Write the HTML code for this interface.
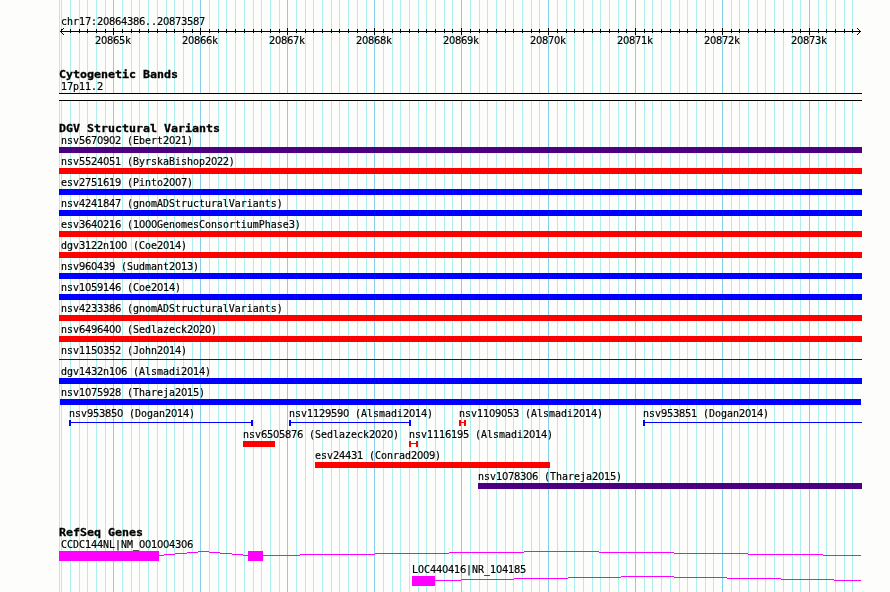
<!DOCTYPE html>
<html lang="en"><head><meta charset="utf-8"><title>chr17:20864386..20873587</title>
<style>
html,body{margin:0;padding:0;background:#fdfefc;}
#p{position:relative;width:890px;height:592px;overflow:hidden;background:#fdfefc;}
#p div{position:absolute;}
.g{top:0;width:1px;height:592px;background:#afeeee;}
.G{top:0;width:1px;height:592px;background:#87ceeb;}
.k{background:#000;}
.t{font-family:"DejaVu Sans Mono","Liberation Mono",monospace;font-size:10.900px;line-height:13px;height:13px;color:#000;white-space:pre;transform:scaleX(0.9143);transform-origin:0 0;-webkit-text-stroke:0.2px #000;}
.b{font-family:"DejaVu Sans Mono","Liberation Mono",monospace;font-weight:bold;font-size:11.000px;line-height:13px;height:13px;color:#000;white-space:pre;transform:scaleX(1.0570);transform-origin:0 0;-webkit-text-stroke:0.3px #000;}
.d{font-family:"DejaVu Sans","Liberation Sans",sans-serif;letter-spacing:-0.3726px;}
.w{background:#fdfefc;}
.r{background:#f00;}.u{background:#00f;}.i{background:#4b0082;}.m{background:#f0f;}
#tx{left:0;top:0;width:890px;height:592px;will-change:transform;}
</style></head><body><div id="p">
<div class="g" style="left:59px"></div>
<div class="g" style="left:61px"></div>
<div class="g" style="left:70px"></div>
<div class="g" style="left:79px"></div>
<div class="g" style="left:87px"></div>
<div class="g" style="left:96px"></div>
<div class="g" style="left:105px"></div>
<div class="G" style="left:113px"></div>
<div class="g" style="left:122px"></div>
<div class="g" style="left:131px"></div>
<div class="g" style="left:139px"></div>
<div class="g" style="left:148px"></div>
<div class="g" style="left:157px"></div>
<div class="g" style="left:166px"></div>
<div class="g" style="left:174px"></div>
<div class="g" style="left:183px"></div>
<div class="g" style="left:192px"></div>
<div class="G" style="left:200px"></div>
<div class="g" style="left:209px"></div>
<div class="g" style="left:218px"></div>
<div class="g" style="left:226px"></div>
<div class="g" style="left:235px"></div>
<div class="g" style="left:244px"></div>
<div class="g" style="left:253px"></div>
<div class="g" style="left:261px"></div>
<div class="g" style="left:270px"></div>
<div class="g" style="left:279px"></div>
<div class="G" style="left:287px"></div>
<div class="g" style="left:296px"></div>
<div class="g" style="left:305px"></div>
<div class="g" style="left:313px"></div>
<div class="g" style="left:322px"></div>
<div class="g" style="left:331px"></div>
<div class="g" style="left:339px"></div>
<div class="g" style="left:348px"></div>
<div class="g" style="left:357px"></div>
<div class="g" style="left:366px"></div>
<div class="G" style="left:374px"></div>
<div class="g" style="left:383px"></div>
<div class="g" style="left:392px"></div>
<div class="g" style="left:400px"></div>
<div class="g" style="left:409px"></div>
<div class="g" style="left:418px"></div>
<div class="g" style="left:426px"></div>
<div class="g" style="left:435px"></div>
<div class="g" style="left:444px"></div>
<div class="g" style="left:452px"></div>
<div class="G" style="left:461px"></div>
<div class="g" style="left:470px"></div>
<div class="g" style="left:479px"></div>
<div class="g" style="left:487px"></div>
<div class="g" style="left:496px"></div>
<div class="g" style="left:505px"></div>
<div class="g" style="left:513px"></div>
<div class="g" style="left:522px"></div>
<div class="g" style="left:531px"></div>
<div class="g" style="left:539px"></div>
<div class="G" style="left:548px"></div>
<div class="g" style="left:557px"></div>
<div class="g" style="left:566px"></div>
<div class="g" style="left:574px"></div>
<div class="g" style="left:583px"></div>
<div class="g" style="left:592px"></div>
<div class="g" style="left:600px"></div>
<div class="g" style="left:609px"></div>
<div class="g" style="left:618px"></div>
<div class="g" style="left:626px"></div>
<div class="G" style="left:635px"></div>
<div class="g" style="left:644px"></div>
<div class="g" style="left:652px"></div>
<div class="g" style="left:661px"></div>
<div class="g" style="left:670px"></div>
<div class="g" style="left:679px"></div>
<div class="g" style="left:687px"></div>
<div class="g" style="left:696px"></div>
<div class="g" style="left:705px"></div>
<div class="g" style="left:713px"></div>
<div class="G" style="left:722px"></div>
<div class="g" style="left:731px"></div>
<div class="g" style="left:739px"></div>
<div class="g" style="left:748px"></div>
<div class="g" style="left:757px"></div>
<div class="g" style="left:765px"></div>
<div class="g" style="left:774px"></div>
<div class="g" style="left:783px"></div>
<div class="g" style="left:792px"></div>
<div class="g" style="left:800px"></div>
<div class="G" style="left:809px"></div>
<div class="g" style="left:818px"></div>
<div class="g" style="left:826px"></div>
<div class="g" style="left:835px"></div>
<div class="g" style="left:844px"></div>
<div class="g" style="left:852px"></div>
<div class="k" style="left:60px;top:31px;width:801px;height:1px"></div>
<div class="k" style="left:61px;top:30px;width:1px;height:1px"></div>
<div class="k" style="left:61px;top:32px;width:1px;height:1px"></div>
<div class="k" style="left:859px;top:30px;width:1px;height:1px"></div>
<div class="k" style="left:859px;top:32px;width:1px;height:1px"></div>
<div class="k" style="left:62px;top:29px;width:1px;height:1px"></div>
<div class="k" style="left:62px;top:33px;width:1px;height:1px"></div>
<div class="k" style="left:858px;top:29px;width:1px;height:1px"></div>
<div class="k" style="left:858px;top:33px;width:1px;height:1px"></div>
<div class="k" style="left:63px;top:28px;width:1px;height:1px"></div>
<div class="k" style="left:63px;top:34px;width:1px;height:1px"></div>
<div class="k" style="left:857px;top:28px;width:1px;height:1px"></div>
<div class="k" style="left:857px;top:34px;width:1px;height:1px"></div>
<div class="k" style="left:61px;top:29px;width:1px;height:4px"></div>
<div class="k" style="left:70px;top:29px;width:1px;height:4px"></div>
<div class="k" style="left:79px;top:29px;width:1px;height:4px"></div>
<div class="k" style="left:87px;top:29px;width:1px;height:4px"></div>
<div class="k" style="left:96px;top:29px;width:1px;height:4px"></div>
<div class="k" style="left:105px;top:29px;width:1px;height:4px"></div>
<div class="k" style="left:113px;top:28px;width:1px;height:7px"></div>
<div class="k" style="left:122px;top:29px;width:1px;height:4px"></div>
<div class="k" style="left:131px;top:29px;width:1px;height:4px"></div>
<div class="k" style="left:139px;top:29px;width:1px;height:4px"></div>
<div class="k" style="left:148px;top:29px;width:1px;height:4px"></div>
<div class="k" style="left:157px;top:29px;width:1px;height:4px"></div>
<div class="k" style="left:166px;top:29px;width:1px;height:4px"></div>
<div class="k" style="left:174px;top:29px;width:1px;height:4px"></div>
<div class="k" style="left:183px;top:29px;width:1px;height:4px"></div>
<div class="k" style="left:192px;top:29px;width:1px;height:4px"></div>
<div class="k" style="left:200px;top:28px;width:1px;height:7px"></div>
<div class="k" style="left:209px;top:29px;width:1px;height:4px"></div>
<div class="k" style="left:218px;top:29px;width:1px;height:4px"></div>
<div class="k" style="left:226px;top:29px;width:1px;height:4px"></div>
<div class="k" style="left:235px;top:29px;width:1px;height:4px"></div>
<div class="k" style="left:244px;top:29px;width:1px;height:4px"></div>
<div class="k" style="left:253px;top:29px;width:1px;height:4px"></div>
<div class="k" style="left:261px;top:29px;width:1px;height:4px"></div>
<div class="k" style="left:270px;top:29px;width:1px;height:4px"></div>
<div class="k" style="left:279px;top:29px;width:1px;height:4px"></div>
<div class="k" style="left:287px;top:28px;width:1px;height:7px"></div>
<div class="k" style="left:296px;top:29px;width:1px;height:4px"></div>
<div class="k" style="left:305px;top:29px;width:1px;height:4px"></div>
<div class="k" style="left:313px;top:29px;width:1px;height:4px"></div>
<div class="k" style="left:322px;top:29px;width:1px;height:4px"></div>
<div class="k" style="left:331px;top:29px;width:1px;height:4px"></div>
<div class="k" style="left:339px;top:29px;width:1px;height:4px"></div>
<div class="k" style="left:348px;top:29px;width:1px;height:4px"></div>
<div class="k" style="left:357px;top:29px;width:1px;height:4px"></div>
<div class="k" style="left:366px;top:29px;width:1px;height:4px"></div>
<div class="k" style="left:374px;top:28px;width:1px;height:7px"></div>
<div class="k" style="left:383px;top:29px;width:1px;height:4px"></div>
<div class="k" style="left:392px;top:29px;width:1px;height:4px"></div>
<div class="k" style="left:400px;top:29px;width:1px;height:4px"></div>
<div class="k" style="left:409px;top:29px;width:1px;height:4px"></div>
<div class="k" style="left:418px;top:29px;width:1px;height:4px"></div>
<div class="k" style="left:426px;top:29px;width:1px;height:4px"></div>
<div class="k" style="left:435px;top:29px;width:1px;height:4px"></div>
<div class="k" style="left:444px;top:29px;width:1px;height:4px"></div>
<div class="k" style="left:452px;top:29px;width:1px;height:4px"></div>
<div class="k" style="left:461px;top:28px;width:1px;height:7px"></div>
<div class="k" style="left:470px;top:29px;width:1px;height:4px"></div>
<div class="k" style="left:479px;top:29px;width:1px;height:4px"></div>
<div class="k" style="left:487px;top:29px;width:1px;height:4px"></div>
<div class="k" style="left:496px;top:29px;width:1px;height:4px"></div>
<div class="k" style="left:505px;top:29px;width:1px;height:4px"></div>
<div class="k" style="left:513px;top:29px;width:1px;height:4px"></div>
<div class="k" style="left:522px;top:29px;width:1px;height:4px"></div>
<div class="k" style="left:531px;top:29px;width:1px;height:4px"></div>
<div class="k" style="left:539px;top:29px;width:1px;height:4px"></div>
<div class="k" style="left:548px;top:28px;width:1px;height:7px"></div>
<div class="k" style="left:557px;top:29px;width:1px;height:4px"></div>
<div class="k" style="left:566px;top:29px;width:1px;height:4px"></div>
<div class="k" style="left:574px;top:29px;width:1px;height:4px"></div>
<div class="k" style="left:583px;top:29px;width:1px;height:4px"></div>
<div class="k" style="left:592px;top:29px;width:1px;height:4px"></div>
<div class="k" style="left:600px;top:29px;width:1px;height:4px"></div>
<div class="k" style="left:609px;top:29px;width:1px;height:4px"></div>
<div class="k" style="left:618px;top:29px;width:1px;height:4px"></div>
<div class="k" style="left:626px;top:29px;width:1px;height:4px"></div>
<div class="k" style="left:635px;top:28px;width:1px;height:7px"></div>
<div class="k" style="left:644px;top:29px;width:1px;height:4px"></div>
<div class="k" style="left:652px;top:29px;width:1px;height:4px"></div>
<div class="k" style="left:661px;top:29px;width:1px;height:4px"></div>
<div class="k" style="left:670px;top:29px;width:1px;height:4px"></div>
<div class="k" style="left:679px;top:29px;width:1px;height:4px"></div>
<div class="k" style="left:687px;top:29px;width:1px;height:4px"></div>
<div class="k" style="left:696px;top:29px;width:1px;height:4px"></div>
<div class="k" style="left:705px;top:29px;width:1px;height:4px"></div>
<div class="k" style="left:713px;top:29px;width:1px;height:4px"></div>
<div class="k" style="left:722px;top:28px;width:1px;height:7px"></div>
<div class="k" style="left:731px;top:29px;width:1px;height:4px"></div>
<div class="k" style="left:739px;top:29px;width:1px;height:4px"></div>
<div class="k" style="left:748px;top:29px;width:1px;height:4px"></div>
<div class="k" style="left:757px;top:29px;width:1px;height:4px"></div>
<div class="k" style="left:765px;top:29px;width:1px;height:4px"></div>
<div class="k" style="left:774px;top:29px;width:1px;height:4px"></div>
<div class="k" style="left:783px;top:29px;width:1px;height:4px"></div>
<div class="k" style="left:792px;top:29px;width:1px;height:4px"></div>
<div class="k" style="left:800px;top:29px;width:1px;height:4px"></div>
<div class="k" style="left:809px;top:28px;width:1px;height:7px"></div>
<div class="k" style="left:818px;top:29px;width:1px;height:4px"></div>
<div class="k" style="left:826px;top:29px;width:1px;height:4px"></div>
<div class="k" style="left:835px;top:29px;width:1px;height:4px"></div>
<div class="k" style="left:844px;top:29px;width:1px;height:4px"></div>
<div class="k" style="left:852px;top:29px;width:1px;height:4px"></div>
<div class="w" style="left:59px;top:94px;width:803px;height:6px"></div>
<div class="k" style="left:59px;top:93px;width:803px;height:1px"></div>
<div class="k" style="left:59px;top:100px;width:803px;height:1px"></div>
<div class="i" style="left:59px;top:147px;width:803px;height:6px"></div>
<div class="r" style="left:59px;top:168px;width:803px;height:6px"></div>
<div class="u" style="left:59px;top:189px;width:803px;height:6px"></div>
<div class="u" style="left:59px;top:210px;width:803px;height:6px"></div>
<div class="r" style="left:59px;top:231px;width:803px;height:6px"></div>
<div class="r" style="left:59px;top:252px;width:803px;height:6px"></div>
<div class="u" style="left:59px;top:273px;width:803px;height:6px"></div>
<div class="u" style="left:59px;top:294px;width:803px;height:6px"></div>
<div class="r" style="left:59px;top:315px;width:803px;height:6px"></div>
<div class="r" style="left:59px;top:336px;width:803px;height:6px"></div>
<div class="u" style="left:59px;top:359px;width:803px;height:1px"></div>
<div class="u" style="left:59px;top:378px;width:803px;height:6px"></div>
<div class="u" style="left:60px;top:399px;width:801px;height:6px"></div>
<div class="u" style="left:69px;top:422px;width:184px;height:1px"></div>
<div class="u" style="left:69px;top:420px;width:2px;height:6px"></div>
<div class="u" style="left:251px;top:420px;width:2px;height:6px"></div>
<div class="u" style="left:289px;top:422px;width:122px;height:1px"></div>
<div class="u" style="left:289px;top:420px;width:2px;height:6px"></div>
<div class="u" style="left:409px;top:420px;width:2px;height:6px"></div>
<div class="r" style="left:459px;top:422px;width:7px;height:1px"></div>
<div class="r" style="left:459px;top:420px;width:2px;height:6px"></div>
<div class="r" style="left:464px;top:420px;width:2px;height:6px"></div>
<div class="u" style="left:643px;top:422px;width:219px;height:1px"></div>
<div class="u" style="left:643px;top:420px;width:2px;height:6px"></div>
<div class="r" style="left:243px;top:441px;width:32px;height:6px"></div>
<div class="r" style="left:409px;top:443px;width:9px;height:1px"></div>
<div class="r" style="left:409px;top:441px;width:2px;height:6px"></div>
<div class="r" style="left:416px;top:441px;width:2px;height:6px"></div>
<div class="r" style="left:315px;top:462px;width:235px;height:6px"></div>
<div class="i" style="left:478px;top:483px;width:384px;height:6px"></div>
<div class="m" style="left:59px;top:551px;width:100px;height:10px"></div>
<div class="m" style="left:248px;top:551px;width:15px;height:10px"></div>
<div class="m" style="left:412px;top:576px;width:23px;height:10px"></div>
<div class="m" style="left:158px;top:555px;width:6px;height:1px"></div>
<div class="m" style="left:164px;top:554px;width:11px;height:1px"></div>
<div class="m" style="left:175px;top:553px;width:12px;height:1px"></div>
<div class="m" style="left:187px;top:552px;width:11px;height:1px"></div>
<div class="m" style="left:198px;top:551px;width:6px;height:1px"></div>
<div class="m" style="left:203px;top:551px;width:6px;height:1px"></div>
<div class="m" style="left:209px;top:552px;width:11px;height:1px"></div>
<div class="m" style="left:220px;top:553px;width:12px;height:1px"></div>
<div class="m" style="left:232px;top:554px;width:11px;height:1px"></div>
<div class="m" style="left:243px;top:555px;width:6px;height:1px"></div>
<div class="m" style="left:262px;top:555px;width:38px;height:1px"></div>
<div class="m" style="left:300px;top:554px;width:75px;height:1px"></div>
<div class="m" style="left:375px;top:553px;width:74px;height:1px"></div>
<div class="m" style="left:449px;top:552px;width:75px;height:1px"></div>
<div class="m" style="left:524px;top:551px;width:38px;height:1px"></div>
<div class="m" style="left:561px;top:551px;width:38px;height:1px"></div>
<div class="m" style="left:599px;top:552px;width:75px;height:1px"></div>
<div class="m" style="left:674px;top:553px;width:74px;height:1px"></div>
<div class="m" style="left:748px;top:554px;width:75px;height:1px"></div>
<div class="m" style="left:823px;top:555px;width:38px;height:1px"></div>
<div class="m" style="left:434px;top:580px;width:27px;height:1px"></div>
<div class="m" style="left:461px;top:579px;width:53px;height:1px"></div>
<div class="m" style="left:514px;top:578px;width:54px;height:1px"></div>
<div class="m" style="left:568px;top:577px;width:53px;height:1px"></div>
<div class="m" style="left:621px;top:576px;width:27px;height:1px"></div>
<div class="m" style="left:647px;top:576px;width:27px;height:1px"></div>
<div class="m" style="left:674px;top:577px;width:53px;height:1px"></div>
<div class="m" style="left:727px;top:578px;width:54px;height:1px"></div>
<div class="m" style="left:781px;top:579px;width:53px;height:1px"></div>
<div class="m" style="left:834px;top:580px;width:27px;height:1px"></div>
<div id="tx">
<div class="t" style="left:61px;top:15px">chr<span class="d">17</span>:<span class="d">20864386</span>..<span class="d">20873587</span></div>
<div class="t" style="left:95px;top:34px"><span class="d">20865</span>k</div>
<div class="t" style="left:182px;top:34px"><span class="d">20866</span>k</div>
<div class="t" style="left:269px;top:34px"><span class="d">20867</span>k</div>
<div class="t" style="left:356px;top:34px"><span class="d">20868</span>k</div>
<div class="t" style="left:443px;top:34px"><span class="d">20869</span>k</div>
<div class="t" style="left:530px;top:34px"><span class="d">20870</span>k</div>
<div class="t" style="left:617px;top:34px"><span class="d">20871</span>k</div>
<div class="t" style="left:704px;top:34px"><span class="d">20872</span>k</div>
<div class="t" style="left:791px;top:34px"><span class="d">20873</span>k</div>
<div class="b" style="left:59px;top:68px">Cytogenetic Bands</div>
<div class="t" style="left:61px;top:80px"><span class="d">17</span>p<span class="d">11</span>.<span class="d">2</span></div>
<div class="b" style="left:59px;top:122px">DGV Structural Variants</div>
<div class="t" style="left:61px;top:134px">nsv<span class="d">5670902</span> (Ebert<span class="d">2021</span>)</div>
<div class="t" style="left:61px;top:155px">nsv<span class="d">5524051</span> (ByrskaBishop<span class="d">2022</span>)</div>
<div class="t" style="left:61px;top:176px">esv<span class="d">2751619</span> (Pinto<span class="d">2007</span>)</div>
<div class="t" style="left:61px;top:197px">nsv<span class="d">4241847</span> (gnomADStructuralVariants)</div>
<div class="t" style="left:61px;top:218px">esv<span class="d">3640216</span> (<span class="d">1000</span>GenomesConsortiumPhase<span class="d">3</span>)</div>
<div class="t" style="left:61px;top:239px">dgv<span class="d">3122</span>n<span class="d">100</span> (Coe<span class="d">2014</span>)</div>
<div class="t" style="left:61px;top:260px">nsv<span class="d">960439</span> (Sudmant<span class="d">2013</span>)</div>
<div class="t" style="left:61px;top:281px">nsv<span class="d">1059146</span> (Coe<span class="d">2014</span>)</div>
<div class="t" style="left:61px;top:302px">nsv<span class="d">4233386</span> (gnomADStructuralVariants)</div>
<div class="t" style="left:61px;top:323px">nsv<span class="d">6496400</span> (Sedlazeck<span class="d">2020</span>)</div>
<div class="t" style="left:61px;top:344px">nsv<span class="d">1150352</span> (John<span class="d">2014</span>)</div>
<div class="t" style="left:61px;top:365px">dgv<span class="d">1432</span>n<span class="d">106</span> (Alsmadi<span class="d">2014</span>)</div>
<div class="t" style="left:61px;top:386px">nsv<span class="d">1075928</span> (Thareja<span class="d">2015</span>)</div>
<div class="t" style="left:69px;top:407px">nsv<span class="d">953850</span> (Dogan<span class="d">2014</span>)</div>
<div class="t" style="left:289px;top:407px">nsv<span class="d">1129590</span> (Alsmadi<span class="d">2014</span>)</div>
<div class="t" style="left:459px;top:407px">nsv<span class="d">1109053</span> (Alsmadi<span class="d">2014</span>)</div>
<div class="t" style="left:643px;top:407px">nsv<span class="d">953851</span> (Dogan<span class="d">2014</span>)</div>
<div class="t" style="left:243px;top:428px">nsv<span class="d">6505876</span> (Sedlazeck<span class="d">2020</span>)</div>
<div class="t" style="left:409px;top:428px">nsv<span class="d">1116195</span> (Alsmadi<span class="d">2014</span>)</div>
<div class="t" style="left:315px;top:449px">esv<span class="d">24431</span> (Conrad<span class="d">2009</span>)</div>
<div class="t" style="left:478px;top:470px">nsv<span class="d">1078306</span> (Thareja<span class="d">2015</span>)</div>
<div class="b" style="left:59px;top:526px">RefSeq Genes</div>
<div class="t" style="left:61px;top:538px">CCDC<span class="d">144</span>NL|NM_<span class="d">001004306</span></div>
<div class="t" style="left:412px;top:563px">LOC<span class="d">440416</span>|NR_<span class="d">104185</span></div>
</div>
</div></body></html>
